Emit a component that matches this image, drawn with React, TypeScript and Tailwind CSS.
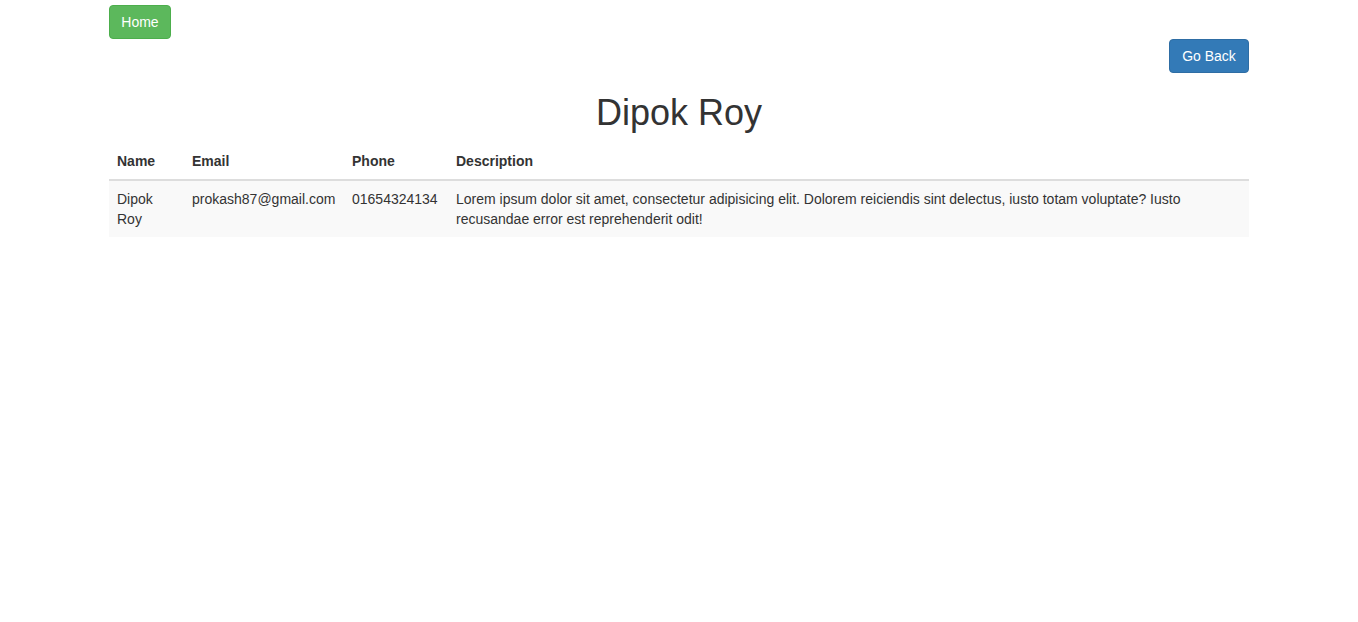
import React from 'react';

const desc =
  'Lorem ipsum dolor sit amet, consectetur adipisicing elit. Dolorem reiciendis sint delectus, iusto totam voluptate? Iusto recusandae error est reprehenderit odit!';

export default function App() {
  return (
    <div className="min-h-screen bg-white text-[14px] leading-[20px] text-[#333] font-['Liberation_Sans',Arial,sans-serif]">
      <div className="w-[1170px] mx-auto px-[15px]">
        {/* top nav */}
        <div className="pt-[5px]">
          <a className="inline-block w-[62px] text-center py-1.5 rounded bg-[#5cb85c] border border-[#4cae4c] text-white h-[34px] leading-[20px]">
            Home
          </a>
        </div>
        <div className="flex justify-end">
          <a className="inline-block w-[80px] text-center py-1.5 rounded bg-[#337ab7] border border-[#2e6da4] text-white h-[34px] leading-[20px]">
            Go Back
          </a>
        </div>

        <h1 className="mt-5 mb-2.5 text-center text-[36px] leading-[1.1] font-medium">Dipok Roy</h1>

        <table className="w-full table-fixed border-collapse mb-5">
          <thead>
            <tr>
              <th className="w-[75px] text-left font-bold p-2 border-b-2 border-[#ddd] align-bottom">Name</th>
              <th className="w-[160px] text-left font-bold p-2 border-b-2 border-[#ddd] align-bottom">Email</th>
              <th className="w-[104px] text-left font-bold p-2 border-b-2 border-[#ddd] align-bottom">Phone</th>
              <th className="text-left font-bold p-2 border-b-2 border-[#ddd] align-bottom">Description</th>
            </tr>
          </thead>
          <tbody>
            <tr className="bg-[#f9f9f9]">
              <td className="p-2 align-top">Dipok Roy</td>
              <td className="p-2 align-top">prokash87@gmail.com</td>
              <td className="p-2 align-top">01654324134</td>
              <td className="p-2 align-top">{desc}</td>
            </tr>
          </tbody>
        </table>
      </div>
    </div>
  );
}
